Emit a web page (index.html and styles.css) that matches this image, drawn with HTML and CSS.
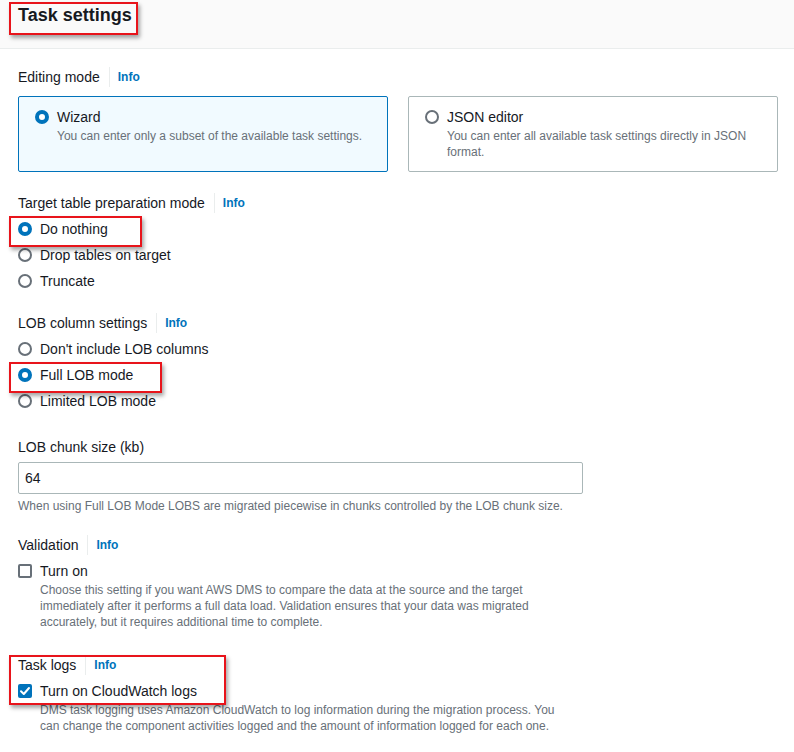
FILE: index.html
```html
<!DOCTYPE html>
<html>
<head>
<meta charset="utf-8">
<link rel="stylesheet" href="styles.css">
</head>
<body>
<div class="header">
  <h2 class="title"><span class="hl hl-title">Task settings</span></h2>
</div>
<div class="content">
  <div class="label mt18"><span>Editing mode</span><span class="divider"></span><a class="info">Info</a></div>
  <div class="tiles">
    <div class="tile selected">
      <div class="row"><span class="radio checked"></span><span>Wizard</span></div>
      <div class="desc">You can enter only a subset of the available task settings.</div>
    </div>
    <div class="tile">
      <div class="row"><span class="radio"></span><span>JSON editor</span></div>
      <div class="desc">You can enter all available task settings directly in JSON format.</div>
    </div>
  </div>

  <div class="label mt21"><span>Target table preparation mode</span><span class="divider"></span><a class="info">Info</a></div>
  <div class="options">
    <div class="row"><span class="hl hl-do"><span class="radio checked"></span><span>Do nothing</span></span></div>
    <div class="row"><span class="radio"></span><span>Drop tables on target</span></div>
    <div class="row"><span class="radio"></span><span>Truncate</span></div>
  </div>

  <div class="label mt22"><span>LOB column settings</span><span class="divider"></span><a class="info">Info</a></div>
  <div class="options">
    <div class="row"><span class="radio"></span><span>Don't include LOB columns</span></div>
    <div class="row"><span class="hl hl-lob"><span class="radio checked"></span><span>Full LOB mode</span></span></div>
    <div class="row"><span class="radio"></span><span>Limited LOB mode</span></div>
  </div>

  <div class="label mt26"><span>LOB chunk size (kb)</span></div>
  <div class="input">64</div>
  <div class="desc help">When using Full LOB Mode LOBS are migrated piecewise in chunks controlled by the LOB chunk size.</div>

  <div class="label mt21"><span>Validation</span><span class="divider"></span><a class="info">Info</a></div>
  <div class="row mt6"><span class="checkbox"></span><span>Turn on</span></div>
  <div class="desc indent">Choose this setting if you want AWS DMS to compare the data at the source and the target immediately after it performs a full data load. Validation ensures that your data was migrated accurately, but it requires additional time to complete.</div>

  <div class="hl hl-logs mt25">
    <div class="label"><span>Task logs</span><span class="divider"></span><a class="info">Info</a></div>
    <div class="row mt6"><span class="checkbox checked"><svg viewBox="0 0 14 14" width="14" height="14"><path d="M3 7.2 L5.8 10 L11 4" fill="none" stroke="#fff" stroke-width="2" stroke-linecap="round" stroke-linejoin="round"/></svg></span><span>Turn on CloudWatch logs</span></div>
  </div>
  <div class="desc indent">DMS task logging uses Amazon CloudWatch to log information during the migration process. You can change the component activities logged and the amount of information logged for each one.</div>
</div>
</body>
</html>
```
FILE: styles.css
```css
* { box-sizing: border-box; }
body {
  margin: 0;
  font-family: "Liberation Sans", Arial, sans-serif;
  font-size: 14px;
  line-height: 20px;
  color: #16191f;
  background: #fff;
}
.header {
  height: 49px;
  background: #fafafa;
  border-bottom: 1px solid #eaeded;
  padding: 3px 0 0 18px;
}
.title {
  margin: 0;
  font-size: 18px;
  line-height: 24px;
  font-weight: bold;
}
.hl { position: relative; display: inline-flex; }
.hl::after {
  content: "";
  position: absolute;
  border: 2px solid #e8141b;
  box-shadow: 2px 3px 4px rgba(0,0,0,0.35);
  pointer-events: none;
}
.hl-title::after { left: -9px; top: -1px; width: 125px; height: 29px; }
.hl-do::after { left: -9px; top: -3px; width: 129px; height: 27px; }
.hl-lob::after { left: -9px; top: -3px; width: 149px; height: 27px; }
.hl-logs { display: flex; flex-direction: column; align-self: flex-start; width: max-content; }
.hl-logs::after { left: -9px; top: 0px; width: 213px; height: 46px; }

.content {
  padding: 0 16px 0 18px;
  display: flex;
  flex-direction: column;
}
.label {
  display: flex;
  align-items: center;
  height: 20px;
}
.divider {
  width: 1px;
  height: 20px;
  background: #eaeded;
  margin: 0 8px 0 9px;
}
.info {
  color: #0073bb;
  font-weight: bold;
  font-size: 12px;
}
.mt18 { margin-top: 18px; }
.mt21 { margin-top: 21px; }
.mt22 { margin-top: 22px; }
.mt25 { margin-top: 25px; }
.mt26 { margin-top: 26px; }
.mt6 { margin-top: 6px; }

.tiles {
  margin-top: 9px;
  display: grid;
  grid-template-columns: 1fr 1fr;
  column-gap: 20px;
}
.tile {
  height: 76px;
  border: 1px solid #aab7b8;
  border-radius: 2px;
  padding: 10px 16px 0 16px;
}
.tile.selected {
  border-color: #0073bb;
  background: #f1faff;
}
.tile .desc { padding-left: 22px; margin-top: 1px; }

.row {
  display: flex;
  align-items: center;
  height: 20px;
  gap: 8px;
}
.hl.hl-do, .hl.hl-lob { align-items: center; gap: 8px; height: 20px; }
.options {
  margin-top: 6px;
  display: flex;
  flex-direction: column;
  gap: 6px;
}
.radio {
  width: 14px;
  height: 14px;
  border-radius: 50%;
  border: 2px solid #687078;
  flex: none;
  background: #fff;
}
.radio.checked {
  border: 4.5px solid #0073bb;
}
.checkbox {
  width: 14px;
  height: 14px;
  border: 2px solid #687078;
  border-radius: 2px;
  flex: none;
  display: flex;
}
.checkbox.checked {
  border: none;
  background: #0073bb;
}
.desc {
  font-size: 12px;
  line-height: 16px;
  color: #687078;
}
.indent { padding-left: 22px; margin-top: 1px; width: 552px; }
.input {
  margin-top: 5px;
  width: 565px;
  height: 32px;
  border: 1px solid #aab7b8;
  border-radius: 2px;
  padding: 0 0 0 6px;
  display: flex;
  align-items: center;
}
.help { margin-top: 4px; }
```
